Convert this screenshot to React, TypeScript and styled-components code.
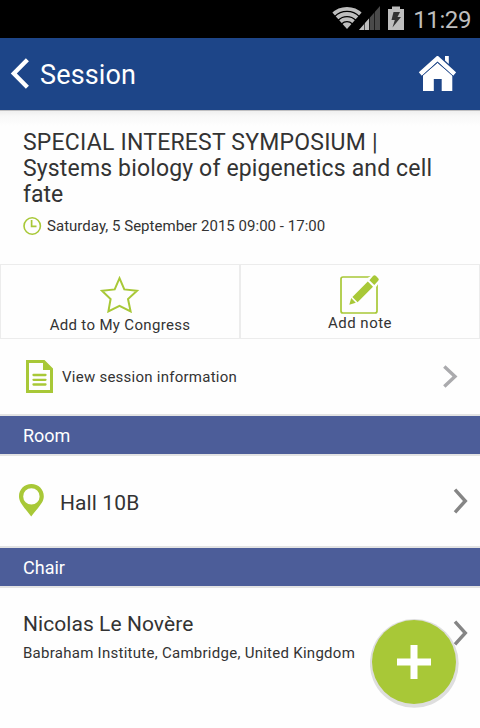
import React from "react";
import styled, { createGlobalStyle } from "styled-components";

const GREEN = "#a8c837";

const GlobalStyle = createGlobalStyle`
  * { box-sizing: border-box; }
  html, body { margin: 0; padding: 0; }
  body { background: #fefefe; font-family: Roboto, "Liberation Sans", sans-serif; color: #333; overflow: hidden; }
`;

const Screen = styled.div`
  position: relative;
  width: 480px;
  height: 728px;
  display: flex;
  flex-direction: column;
  background: #fefefe;
  overflow: hidden;
`;

const StatusBar = styled.div`
  height: 38px;
  background: #000;
  display: flex;
  align-items: flex-start;
  justify-content: flex-end;
  padding-right: 9px;
  flex: none;
`;

const Icon = styled.svg`
  display: block;
  flex: none;
`;

const Label = styled.span<{ $size: number; $spacing?: number; $line?: number }>`
  display: block;
  white-space: nowrap;
  font-size: ${(p) => p.$size}px;
  letter-spacing: ${(p) => p.$spacing ?? 0}px;
  line-height: ${(p) => p.$line ?? 24}px;
`;

const Clock = styled(Label)`
  color: #bebebe;
  margin-left: 9px;
`;

const Header = styled.header`
  height: 72px;
  background: #1d4588;
  color: #fff;
  display: flex;
  align-items: center;
  padding: 0 24px 0 10px;
  flex: none;
`;

const HeaderTitle = styled(Label)`
  margin-left: 10px;
  padding-top: 1px;
  flex: 1;
`;

const HeaderShadow = styled.div`
  height: 16px;
  flex: none;
  border-top: 1px solid #bfbfc1;
  background: linear-gradient(#efefef, #f8f8f8 35%, #fefefe);
`;

const Intro = styled.section`
  height: 138px;
  padding: 4px 23px 0;
  flex: none;
`;

const Title = styled.h1`
  margin: 0;
  font-weight: 400;
`;

const DateRow = styled.div`
  display: flex;
  align-items: center;
  gap: 5px;
  margin-top: 6px;
`;

const Actions = styled.div`
  display: grid;
  grid-template-columns: 1fr 1fr;
  height: 75px;
  flex: none;
`;

const Action = styled.div<{ $top: number }>`
  border: 1px solid #ececec;
  display: flex;
  flex-direction: column;
  align-items: center;
  padding-top: ${(p) => p.$top}px;
`;

const Row = styled.div<{ $height: number; $left: number; $right: number; $gap: number }>`
  display: flex;
  align-items: center;
  flex: none;
  gap: ${(p) => p.$gap}px;
  height: ${(p) => p.$height}px;
  padding: 0 ${(p) => p.$right}px 0 ${(p) => p.$left}px;
`;

const Fill = styled.div`
  flex: 1;
`;

const RowText = styled.div<{ $drop: number }>`
  padding-top: ${(p) => p.$drop}px;
`;

const SectionBar = styled.div`
  height: 42px;
  flex: none;
  display: flex;
  align-items: center;
  padding: 1px 0 0 23px;
  color: #fff;
  background: #4c5d99;
  border-top: 2px solid #e3e3e3;
  border-bottom: 2px solid #e3e3e3;
`;

const Fab = styled.div`
  position: absolute;
  left: 370px;
  top: 619px;
`;

const Chevron = ({ color, small }: { color: string; small?: boolean }) => (
  <Icon width="16" height="28" viewBox="0 0 16 28">
    <path d={small ? "M2.3 3.4L13 13.4L2.3 23.6" : "M2 2.7L12.3 14L2 25.3"} fill="none" stroke={color} strokeWidth="3.4" />
  </Icon>
);

const StatusIcons = () => (
  <Icon width="74" height="38" viewBox="330 0 74 38">
    <clipPath id="wifi"><path d="M347 29L331 11V4H363V11Z" /></clipPath>
    <g clipPath="url(#wifi)" fill="none" stroke="#bebebe" strokeWidth="3.8">
      <circle cx="347" cy="29" r="20.1" />
      <circle cx="347" cy="29" r="15" />
      <circle cx="347" cy="29" r="9.9" />
      <circle cx="347" cy="29" r="3.4" strokeWidth="6.8" />
    </g>
    <path d="M359 30L380 6V30Z" fill="#4a4a4a" />
    <path d="M359 30L369 18.6V30Z" fill="#bebebe" />
    <path d="M364.5 20V30M369.5 14V30M374.5 10V30" stroke="#000" strokeOpacity="0.6" strokeWidth="1" />
    <path d="M388 9H392V6.5H400V9H404V30H388Z" fill="#bebebe" />
    <path d="M393.5 12H400L397.5 17H401L392.5 27.5L394.8 20H391.5Z" fill="#333" />
  </Icon>
);

export default function App() {
  return (
    <>
      <GlobalStyle />
      <Screen>
        <StatusBar>
          <StatusIcons />
          <Clock $size={24} $spacing={-0.4} $line={40}>11:29</Clock>
        </StatusBar>
        <Header>
          <Icon width="20" height="32" viewBox="10 58 20 32">
            <path d="M27.4 59.8L13.8 73.5L27.4 87.2" fill="none" stroke="#fff" strokeWidth="4.3" />
          </Icon>
          <HeaderTitle $size={27} $spacing={0.15} $line={72}>Session</HeaderTitle>
          <Icon width="38" height="36" viewBox="418 56 38 36">
            <path d="M445 56H448.8V64L445 60.5Z" fill="#fff" />
            <path d="M420.3 74L437.5 58.5L454.7 74" fill="none" stroke="#fff" strokeWidth="4.5" />
            <path d="M423 75L437.5 62.8L452.3 75V91H441.7V79H433.8V91H423Z" fill="#fff" />
            <path d="M422 76L437.5 62.3L453 76" fill="none" stroke="#1d4588" strokeWidth="0.9" />
          </Icon>
        </Header>
        <HeaderShadow />
        <Intro>
          <Title>
            <Label $size={23} $spacing={0.21} $line={26}>SPECIAL INTEREST SYMPOSIUM |</Label>
            <Label $size={23} $spacing={0.15} $line={26}>Systems biology of epigenetics and cell</Label>
            <Label $size={23} $line={26}>fate</Label>
          </Title>
          <DateRow>
            <Icon width="19" height="20" viewBox="0 0 19 20">
              <circle cx="9.2" cy="10" r="8.2" fill="none" stroke={GREEN} strokeWidth="1.6" />
              <path d="M8.6 4V10.3H13.5" fill="none" stroke={GREEN} strokeWidth="1.7" />
            </Icon>
            <Label $size={15} $spacing={0.03}>Saturday, 5 September 2015 09:00 - 17:00</Label>
          </DateRow>
        </Intro>
        <Actions>
          <Action $top={10}>
            <Icon width="40" height="38" viewBox="100 275 40 38">
              <path d="M119.5 278.2L124.3 289.4L137 290.7L128 299L130.6 311.4L119.5 305.8L108.4 311.4L110.6 299L102 290.7L114.7 289.4Z" fill="none" stroke={GREEN} strokeWidth="2" />
            </Icon>
            <Label $size={15} $spacing={0.33}>Add to My Congress</Label>
          </Action>
          <Action $top={9}>
            <Icon width="40" height="40" viewBox="340 274 40 40">
              <rect x="341" y="277" width="36" height="36" rx="2" fill="none" stroke={GREEN} strokeWidth="1.7" />
              <path d="M366 279L374 274L381 280L376 287L370 289Z" fill="#fefefe" />
              <path d="M349.3 304.8L351.2 298L355.8 302.8Z M352.4 297L367.8 281.6L373 286.8L357.6 302.2Z M369.4 280.2L373 276Q374.5 274.5 376 276L378.4 278.4Q379.5 279.5 378 281L374.3 285Z" fill={GREEN} />
            </Icon>
            <Label $size={15} $spacing={0.5} $line={18}>Add note</Label>
          </Action>
        </Actions>
        <Row $height={75} $left={26} $right={22} $gap={9}>
          <Icon width="27" height="33" viewBox="26 360 27 33">
            <path d="M26 360H44.5L53 368.5V393H26Z M29 363V390H50V370H43V363Z" fill={GREEN} fillRule="evenodd" />
            <path d="M33.5 375H45.5M33.5 379.8H45.5M33.5 384.5H45.5" stroke={GREEN} strokeWidth="2.3" strokeLinecap="round" />
          </Icon>
          <Label $size={15} $spacing={0.25}>View session information</Label>
          <Fill />
          <Chevron color="#aaaaad" small />
        </Row>
        <SectionBar><Label $size={18} $line={26}>Room</Label></SectionBar>
        <Row $height={90} $left={19} $right={11} $gap={16}>
          <Icon width="25" height="34" viewBox="19 484 25 34">
            <path d="M31.4 484C38.5 484 43.8 489.5 43.8 496.3C43.8 502.5 39 506.5 31.2 516.5C23.5 506.5 19 502.5 19 496.3C19 489.5 24.3 484 31.4 484Z M31.4 488.2A8.2 8.2 0 1 0 31.4 504.6A8.2 8.2 0 1 0 31.4 488.2Z" fill={GREEN} fillRule="evenodd" />
          </Icon>
          <RowText $drop={4}>
            <Label $size={21} $spacing={0.1} $line={28}>Hall 10B</Label>
          </RowText>
          <Fill />
          <Chevron color="#858585" />
        </Row>
        <SectionBar><Label $size={18} $line={26}>Chair</Label></SectionBar>
        <Row $height={90} $left={23} $right={11} $gap={0}>
          <RowText $drop={11}>
            <Label $size={21} $spacing={0.06} $line={28}>Nicolas Le Novère</Label>
            <Label $size={15} $spacing={0.27} $line={30}>Babraham Institute, Cambridge, United Kingdom</Label>
          </RowText>
          <Fill />
          <Chevron color="#858585" />
        </Row>
        <Fab>
          <Icon width="89" height="90" viewBox="370 619 89 90">
            <circle cx="414.3" cy="663.4" r="44.4" fill="#dedede" />
            <circle cx="414" cy="662" r="42" fill={GREEN} />
            <path d="M414 645V679M397 662H431" stroke="#fff" strokeWidth="7" />
          </Icon>
        </Fab>
      </Screen>
    </>
  );
}
